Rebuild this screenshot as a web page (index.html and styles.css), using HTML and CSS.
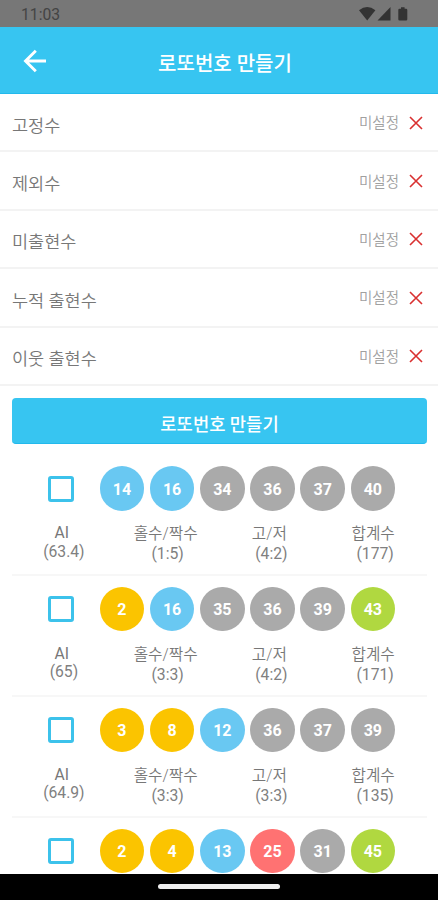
FILE: index.html
```
<!DOCTYPE html>
<html lang="ko">
<head>
    <meta charset="UTF-8">
    <meta name="viewport" content="width=device-width, initial-scale=1.0">
    <title>로또번호 만들기</title>
    <link rel="stylesheet" href="styles.css">
</head>
<body>
    <svg class="sprite" width="0" height="0">
        <symbol id="icon-close" viewBox="0 0 14 14">
            <path d="M1 1L13 13M13 1L1 13" fill="none" stroke="currentColor" stroke-width="1.6"/>
        </symbol>
    </svg>

    <div class="screen">
        <div class="status-bar">
            <span class="clock">11:03</span>
            <svg class="status-icons" width="50" height="14" viewBox="0 0 50 14">
                <path d="M0 3.2Q8.200-3 16.400 3.200L8.200 13.400Z"/>
                <path d="M31.500 0V13.400H18.500Z"/>
                <path d="M42 .3h3.600v1.500h1.500q1.200 0 1.200 1.200v9.200q0 1.200-1.200 1.200h-6.600q-1.200 0-1.200-1.200V3q0-1.200 1.200-1.200H42z"/>
            </svg>
        </div>

        <header class="header">
            <button class="back-btn" aria-label="뒤로">
                <svg width="24" height="24" viewBox="0 0 24 24">
                    <path d="M23 12H2.500M12.800 1.700L2.500 12l10.300 10.300" fill="none" stroke="#fff" stroke-width="2.900"/>
                </svg>
            </button>
            <h1>로또번호 만들기</h1>
        </header>

        <main>
            <ul class="options">
                <li><span class="name">고정수</span><span class="value">미설정</span><svg class="close"><use href="#icon-close"/></svg></li>
                <li><span class="name">제외수</span><span class="value">미설정</span><svg class="close"><use href="#icon-close"/></svg></li>
                <li><span class="name">미출현수</span><span class="value">미설정</span><svg class="close"><use href="#icon-close"/></svg></li>
                <li><span class="name">누적 출현수</span><span class="value">미설정</span><svg class="close"><use href="#icon-close"/></svg></li>
                <li><span class="name">이웃 출현수</span><span class="value">미설정</span><svg class="close"><use href="#icon-close"/></svg></li>
            </ul>

            <button class="generate-btn">로또번호 만들기</button>

            <div class="results">
                <div class="game">
                    <div class="numbers">
                        <span class="checkbox"></span>
                        <span class="ball blue">14</span>
                        <span class="ball blue">16</span>
                        <span class="ball gray">34</span>
                        <span class="ball gray">36</span>
                        <span class="ball gray">37</span>
                        <span class="ball gray">40</span>
                    </div>
                    <div class="stats">
                        <div class="stat ai"><span>AI</span><b>(63.4)</b></div>
                        <div class="stat"><span>홀수/짝수</span><b>(1:5)</b></div>
                        <div class="stat"><span>고/저</span><b>(4:2)</b></div>
                        <div class="stat"><span>합계수</span><b>(177)</b></div>
                    </div>
                </div>

                <div class="game">
                    <div class="numbers">
                        <span class="checkbox"></span>
                        <span class="ball yellow">2</span>
                        <span class="ball blue">16</span>
                        <span class="ball gray">35</span>
                        <span class="ball gray">36</span>
                        <span class="ball gray">39</span>
                        <span class="ball green">43</span>
                    </div>
                    <div class="stats">
                        <div class="stat ai"><span>AI</span><b>(65)</b></div>
                        <div class="stat"><span>홀수/짝수</span><b>(3:3)</b></div>
                        <div class="stat"><span>고/저</span><b>(4:2)</b></div>
                        <div class="stat"><span>합계수</span><b>(171)</b></div>
                    </div>
                </div>

                <div class="game">
                    <div class="numbers">
                        <span class="checkbox"></span>
                        <span class="ball yellow">3</span>
                        <span class="ball yellow">8</span>
                        <span class="ball blue">12</span>
                        <span class="ball gray">36</span>
                        <span class="ball gray">37</span>
                        <span class="ball gray">39</span>
                    </div>
                    <div class="stats">
                        <div class="stat ai"><span>AI</span><b>(64.9)</b></div>
                        <div class="stat"><span>홀수/짝수</span><b>(3:3)</b></div>
                        <div class="stat"><span>고/저</span><b>(3:3)</b></div>
                        <div class="stat"><span>합계수</span><b>(135)</b></div>
                    </div>
                </div>

                <div class="game">
                    <div class="numbers">
                        <span class="checkbox"></span>
                        <span class="ball yellow">2</span>
                        <span class="ball yellow">4</span>
                        <span class="ball blue">13</span>
                        <span class="ball red">25</span>
                        <span class="ball gray">31</span>
                        <span class="ball green">45</span>
                    </div>
                </div>
            </div>
        </main>

        <div class="nav-bar"><span class="handle"></span></div>
    </div>
</body>
</html>
```

FILE: styles.css
```
:root {
    --primary-color: #37c5f1;
    --text-color: #777;
    --line-color: #f3f3f3;
}

* {
    box-sizing: border-box;
}

body {
    margin: 0;
    font-family: Roboto, 'Noto Sans CJK KR', sans-serif;
    color: var(--text-color);
    background: #fff;
}

button {
    border: none;
    padding: 0;
    font-family: inherit;
    color: #fff;
    cursor: pointer;
}

.sprite {
    display: block;
}

.screen {
    display: flex;
    flex-direction: column;
    height: 900px;
    overflow: hidden;
}

/* Status bar */
.status-bar {
    flex: none;
    display: flex;
    justify-content: space-between;
    height: 27px;
    padding: 7px 29px 0 21px;
    background: #777;
    color: #444;
}

.clock {
    font-size: 15.700px;
    line-height: 16px;
}

.status-icons {
    fill: #333;
}

/* Header */
.header {
    flex: none;
    display: grid;
    grid-template-columns: 47px 1fr 47px;
    align-items: center;
    height: 67px;
    background: var(--primary-color);
    border-bottom: 1px solid #22b9ec;
}

.back-btn {
    display: flex;
    justify-content: flex-end;
    padding-top: 1px;
    background: none;
}

.header h1 {
    margin: 8px 0 0 12px;
    font-size: 20px;
    font-weight: 500;
    line-height: 28px;
    text-align: center;
    color: #fff;
}

/* Options */
main {
    flex: 1;
    min-height: 0;
    overflow: hidden;
}

.options {
    margin: 0;
    padding: 0;
    list-style: none;
}

.options li {
    display: flex;
    align-items: center;
    height: 58.400px;
    padding: 1px 15px 0 12px;
    border-bottom: 2px solid var(--line-color);
}

.name {
    flex: 1;
    padding-top: 6px;
    font-size: 17.500px;
    font-weight: 350;
    line-height: 24px;
}

.value {
    margin-right: 10px;
    padding-top: 3px;
    font-size: 14.500px;
    font-weight: 350;
    line-height: 20px;
    color: #a0a0a0;
}

.close {
    width: 14px;
    height: 14px;
    color: #d93030;
}

.generate-btn {
    display: block;
    width: 415px;
    height: 46px;
    margin: 12px 0 0 12px;
    padding-top: 5px;
    border-bottom: 1px solid #22b9ec;
    border-radius: 4px;
    background: var(--primary-color);
    font-size: 17.700px;
    font-weight: 500;
}

/* Generated games */
.results {
    padding: 0 11px 0 12px;
}

.game {
    height: 120.900px;
    padding-top: 10.500px;
    border-bottom: 2px solid #f7f7f7;
}

.game:first-child {
    height: 132.500px;
    padding-top: 22.500px;
}

.numbers {
    display: flex;
    align-items: center;
    gap: 5.700px;
    padding-left: 36px;
}

.checkbox {
    width: 26px;
    height: 26px;
    margin-right: 20px;
    border: 3px solid #3cc2eb;
    border-radius: 3px;
}

.ball {
    display: flex;
    justify-content: center;
    align-items: center;
    width: 44.500px;
    height: 44.500px;
    padding-top: 1px;
    border-radius: 50%;
    color: #fff;
    font-size: 16px;
    font-weight: 700;
}

.yellow { background: #fbc400; }
.blue { background: #69c8f2; }
.red { background: #ff7272; }
.gray { background: #aaa; }
.green { background: #b0d840; }

.stats {
    display: grid;
    grid-template-columns: repeat(4, 1fr);
    margin-top: 13.500px;
}

.stat {
    display: flex;
    flex-direction: column;
    text-align: center;
    font-size: 15.700px;
    font-weight: 350;
    line-height: 20px;
}

.stat span {
    padding-right: 4px;
}

.stat b {
    font-weight: 400;
    color: #808080;
}

.stat.ai {
    font-weight: 400;
    line-height: 18.500px;
}

/* Navigation bar */
.nav-bar {
    flex: none;
    display: flex;
    justify-content: center;
    height: 26px;
    padding-top: 10px;
    background: #000;
}

.handle {
    width: 122px;
    height: 5px;
    border-radius: 3px;
    background: #eee;
}
```
